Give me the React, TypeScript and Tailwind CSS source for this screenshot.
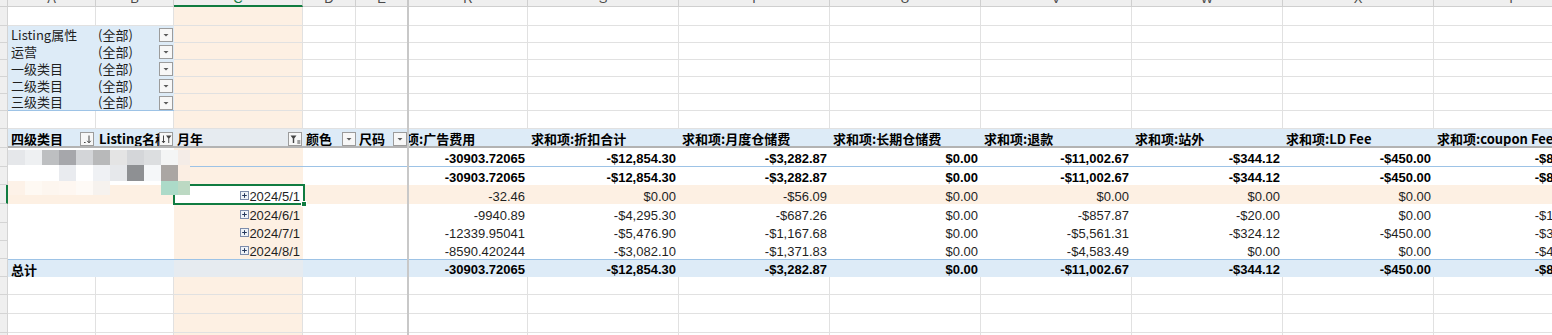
import React from "react";

const GRID = "border-r border-b border-[#e1e1e1]";
const GRID_B = "border-b border-[#e1e1e1]";
const ORANGE = "bg-[#fdf0e3]";
const BLUE = "bg-[#ddebf7]";
const BLUE_C = "bg-[#e6ebf0]";
const CJK = "font-['Noto_Sans_CJK_SC',sans-serif]";

const W = {
  A: "w-[88px]",
  B: "w-[78px]",
  C: "w-[129px]",
  D: "w-[53px]",
  E: "w-[51px]",
  R: "w-[119px]",
  V: "w-[151px]",
  Y: "w-[155px]",
};

const HEADERS = [
  "求和项:折扣合计",
  "求和项:月度仓储费",
  "求和项:长期仓储费",
  "求和项:退款",
  "求和项:站外",
  "求和项:LD Fee",
  "求和项:coupon Fee",
];
const LETTERS = ["S", "T", "U", "V", "W", "X", "Y"];
const FILTERS = ["Listing属性", "运营", "一级类目", "二级类目", "三级类目"];

const TOTAL = ["-30903.72065", "-$12,854.30", "-$3,282.87", "$0.00", "-$11,002.67", "-$344.12", "-$450.00", "-$840.00"];

const MONTHS = [
  { date: "2024/6/1", h: "h-[19px]", vals: ["-9940.89", "-$4,295.30", "-$687.26", "$0.00", "-$857.87", "-$20.00", "$0.00", "-$105.00"] },
  { date: "2024/7/1", h: "h-[18px]", vals: ["-12339.95041", "-$5,476.90", "-$1,167.68", "$0.00", "-$5,561.31", "-$324.12", "-$450.00", "-$320.00"] },
  { date: "2024/8/1", h: "h-[18px]", vals: ["-8590.420244", "-$3,082.10", "-$1,371.83", "$0.00", "-$4,583.49", "$0.00", "$0.00", "-$415.00"] },
];
const MAY = ["-32.46", "$0.00", "-$56.09", "$0.00", "$0.00", "$0.00", "$0.00", "$0.00"];

// pixelated (blurred) labels over the first pivot rows
const MOSAIC = [
  {
    h: "h-[15px]",
    cells: ["bg-[#e5e7ea]", "bg-[#eef0f2]", "bg-[#bdbfc1]", "bg-[#a6a7ab]", "bg-[#d3d5d8]", "bg-[#b8b9ba]", "bg-[#e4e4e4]", "bg-[#d4d6d9]", "bg-[#dcdee0]", "bg-[#f4f5f5]", "bg-[#f4ece7]"],
  },
  {
    h: "h-[16px]",
    cells: ["bg-white", "bg-white", "bg-white", "bg-[#e9ebef]", "bg-white", "bg-[#eff1f4]", "bg-[#e6e8eb]", "bg-[#8e9093]", "bg-[#f5f7f9]", "bg-[#aaa6a3]", "bg-[#fbeee3]"],
  },
  {
    h: "h-[14px]",
    cells: ["bg-[#fdf2e8]", "bg-[#fef9f3]", "bg-[#fdf6ef]", "bg-[#fef7f1]", "bg-[#fefaf6]", "bg-[#f6f2ee]", "bg-transparent", "bg-transparent", "bg-transparent", "bg-[#acdac8]", "bg-[#bcd9c3]"],
  },
];

type CellProps = { w: string; className?: string; clip?: boolean; children?: React.ReactNode };

const Cell = ({ w, className = "", clip = true, children }: CellProps) => (
  <div className={`relative flex shrink-0 items-end ${clip ? "overflow-hidden" : ""} ${w} ${className}`}>{children}</div>
);

const Txt = ({ children, className = "" }: { children: React.ReactNode; className?: string }) => (
  <span className={`whitespace-nowrap leading-[14px] ${className}`}>{children}</span>
);

const RowHead = ({ sel = false }: { sel?: boolean }) => (
  <div
    className={`w-[8px] shrink-0 border-b border-[#d4d4d4] bg-[#efefef] ${
      sel ? "border-r-2 border-r-[#107c41]" : "border-r"
    }`}
  />
);

const Divider = () => <div className="w-[2px] shrink-0 bg-[#c8c8c8]" />;

const Btn = ({ children, className }: { children: React.ReactNode; className: string }) => (
  <div className={`absolute z-10 flex h-[14px] w-[14px] items-center justify-center border border-[#9c9c9c] bg-[#f7f7f7] ${className}`}>
    {children}
  </div>
);

const Tri = () => (
  <svg width="12" height="12" viewBox="0 0 12 12">
    <path d="M3.5 5h5L6 7.6z" fill="#5a5a5a" />
  </svg>
);

const SortIcon = () => (
  <svg width="12" height="12" viewBox="0 0 12 12" fill="none" stroke="#444" strokeWidth="1">
    <path d="M3 9.5h1.6" />
    <path d="M8 2.5v7.2M6.2 7.8 8 9.8l1.8-2" />
  </svg>
);

const SortFilterIcon = () => (
  <svg width="12" height="12" viewBox="0 0 12 12">
    <path d="M3.5 2.5v7.2M2 8l1.5 1.8L5 8" fill="none" stroke="#444" strokeWidth="1" />
    <path d="M6 2.5h5.5L9.2 5.6V10H8.3V5.6z" fill="#444" />
  </svg>
);

const FilterIcon = () => (
  <svg width="12" height="12" viewBox="0 0 12 12">
    <path d="M1.5 2.5h6L5.2 5.6V10H3.8V5.6z" fill="#444" />
    <path d="M8.3 8h3M8.3 10h3" fill="none" stroke="#444" strokeWidth="1" />
  </svg>
);

const Plus = () => (
  <svg className="mb-[4px] shrink-0" width="9" height="9" viewBox="0 0 9 9">
    <rect x="0.5" y="0.5" width="8" height="8" fill="#eef2f8" stroke="#7d8cab" />
    <path d="M2.2 4.5h4.6M4.5 2.2v4.6" stroke="#24375c" strokeWidth="1" />
  </svg>
);

const Letter = ({ children, className = "" }: { children: React.ReactNode; className?: string }) => (
  <span className={`-mt-[8px] leading-[13px] text-[#4a4a4a] ${className}`}>{children}</span>
);

function LetterRow() {
  const cell = "relative flex shrink-0 items-start justify-center overflow-hidden border-b border-[#cfcfcf] bg-[#efefef]";
  return (
    <div className="flex h-[7px]">
      <div className="w-[8px] shrink-0 border-r border-b border-[#cfcfcf] bg-[#efefef]" />
      <div className={`${cell} ${W.A} border-r`}><Letter>A</Letter></div>
      <div className={`${cell} ${W.B} border-r`}><Letter>B</Letter></div>
      <div className={`${cell} ${W.C} border-r border-b-2 border-b-[#107c41]`}><Letter className="text-[#107c41]">C</Letter></div>
      <div className={`${cell} ${W.D} border-r`}><Letter>D</Letter></div>
      <div className={`${cell} ${W.E}`}><Letter>E</Letter></div>
      <Divider />
      <div className={`${cell} ${W.R} border-r`}><Letter>R</Letter></div>
      {LETTERS.map((l) => (
        <div key={l} className={`${cell} ${l === "Y" ? W.Y : W.V} border-r`}><Letter>{l}</Letter></div>
      ))}
    </div>
  );
}

function BlankRow({ h }: { h: string }) {
  return (
    <div className={`flex ${h}`}>
      <RowHead />
      <Cell w={W.A} className={GRID} />
      <Cell w={W.B} className={GRID} />
      <Cell w={W.C} className={`${GRID} ${ORANGE}`} />
      <Cell w={W.D} className={GRID} />
      <Cell w={W.E} className={GRID_B} />
      <Divider />
      <Cell w={W.R} className={GRID} />
      {LETTERS.map((l) => (
        <Cell key={l} w={l === "Y" ? W.Y : W.V} className={GRID} />
      ))}
    </div>
  );
}

function FilterRow({ label, last }: { label: string; last: boolean }) {
  const edge = last ? "border-b border-[#9dc3e6]" : "";
  return (
    <div className={`flex h-[17px] ${CJK}`}>
      <RowHead />
      <Cell w={W.A} className={`${BLUE} ${edge} pl-[3px]`}>
        <Txt className="mb-[1px]">{label}</Txt>
      </Cell>
      <Cell w={W.B} className={`${BLUE} ${edge} pl-[2px]`}>
        <Txt className="mb-[1px]">(全部)</Txt>
        <Btn className="top-[2px] right-px">
          <Tri />
        </Btn>
      </Cell>
      <Cell w={W.C} className={`${GRID} ${ORANGE}`} />
      <Cell w={W.D} className={GRID} />
      <Cell w={W.E} className={GRID_B} />
      <Divider />
      <Cell w={W.R} className={GRID} />
      {LETTERS.map((l) => (
        <Cell key={l} w={l === "Y" ? W.Y : W.V} className={GRID} />
      ))}
    </div>
  );
}

function HeaderRow() {
  const edge = "border-b-2 border-[#b3b3b3]";
  return (
    <div className={`flex h-[19px] font-bold text-black ${CJK}`}>
      <RowHead />
      <Cell w={W.A} className={`${BLUE} ${edge} pl-[3px]`}>
        <Txt>四级类目</Txt>
        <Btn className="top-[3px] right-[2px]">
          <SortIcon />
        </Btn>
      </Cell>
      <Cell w={W.B} className={`${BLUE} ${edge} pl-[3px]`}>
        <Txt>Listing名称</Txt>
        <Btn className="top-[3px] right-px">
          <SortFilterIcon />
        </Btn>
      </Cell>
      <Cell w={W.C} className={`${BLUE_C} ${edge} pl-[3px]`}>
        <Txt>月年</Txt>
        <Btn className="top-[3px] right-px">
          <FilterIcon />
        </Btn>
      </Cell>
      <Cell w={W.D} className={`${BLUE} ${edge} pl-[3px]`}>
        <Txt>颜色</Txt>
        <Btn className="top-[3px] right-0">
          <Tri />
        </Btn>
      </Cell>
      <Cell w={W.E} className={`${BLUE} ${edge} pl-[3px]`}>
        <Txt>尺码</Txt>
        <Btn className="top-[3px] right-0">
          <Tri />
        </Btn>
      </Cell>
      <Divider />
      <Cell w={W.R} className={`${BLUE} ${edge}`}>
        <Txt className="ml-[-29px]">求和项:广告费用</Txt>
      </Cell>
      {HEADERS.map((t, i) => (
        <Cell key={t} w={i === HEADERS.length - 1 ? W.Y : W.V} className={`${BLUE} ${edge} pl-[3px]`}>
          <Txt>{t}</Txt>
        </Cell>
      ))}
    </div>
  );
}

type PivotProps = {
  h: string;
  vals: string[];
  bg?: string;
  cBg?: string;
  edge?: string;
  bold?: boolean;
  label?: string;
  date?: string;
  selected?: boolean;
};

function PivotRow({ h, vals, bg = "", cBg = ORANGE, edge = "", bold = false, label, date, selected = false }: PivotProps) {
  return (
    <div className={`flex ${h} ${bold ? "font-bold text-black" : ""}`}>
      <RowHead sel={selected} />
      <Cell w={W.A} className={`${bg} ${edge} pl-[3px]`}>
        {label && <Txt className={CJK}>{label}</Txt>}
      </Cell>
      <Cell w={W.B} className={`${bg} ${edge}`} />
      <Cell w={W.C} clip={!selected} className={`${selected ? "bg-white" : cBg} ${edge} justify-end pr-[3px]`}>
        {date && (
          <>
            <Plus />
            <Txt>{date}</Txt>
          </>
        )}
        {selected && (
          <>
            <div className="absolute -top-px -left-px -right-[2px] -bottom-px z-10 border-2 border-[#107c41]" />
            <div className="absolute -right-[4px] -bottom-[3px] z-10 h-[6px] w-[6px] border border-white bg-[#107c41]" />
          </>
        )}
      </Cell>
      <Cell w={W.D} className={`${bg} ${edge}`} />
      <Cell w={W.E} className={`${bg} ${edge}`} />
      <Divider />
      <Cell w={W.R} className={`${bg} ${edge} justify-end pr-[3px]`}>
        <Txt>{vals[0]}</Txt>
      </Cell>
      {vals.slice(1).map((v, i) => (
        <Cell key={i} w={i === vals.length - 2 ? W.Y : W.V} className={`${bg} ${edge} justify-end pr-[3px]`}>
          <Txt>{v}</Txt>
        </Cell>
      ))}
    </div>
  );
}

export default function App() {
  return (
    <div className="relative h-[335px] w-[1552px] overflow-hidden bg-white font-['Liberation_Sans','Noto_Sans_CJK_SC',sans-serif] text-[13px] text-[#1f1f1f]">
      <LetterRow />
      <BlankRow h="h-[19px]" />
      {FILTERS.map((f, i) => (
        <FilterRow key={f} label={f} last={i === FILTERS.length - 1} />
      ))}
      <BlankRow h="h-[18px]" />
      <HeaderRow />
      <PivotRow h="h-[19px]" vals={TOTAL} bold edge="border-b border-[#9dc3e6]" />
      <PivotRow h="h-[18px]" vals={TOTAL} bold />
      <PivotRow h="h-[19px]" vals={MAY} bg={ORANGE} date="2024/5/1" selected />
      {MONTHS.map((m) => (
        <PivotRow key={m.date} h={m.h} vals={m.vals} date={m.date} />
      ))}
      <PivotRow h="h-[18px]" vals={TOTAL} bold bg={BLUE} cBg={BLUE_C} edge="border-t border-[#9dc3e6]" label="总计" />
      <BlankRow h="h-[18px]" />
      <BlankRow h="h-[19px]" />
      <BlankRow h="h-[19px]" />
      <BlankRow h="h-[19px]" />

      <div className="absolute left-[8px] top-[150px] z-20 flex flex-col">
        {MOSAIC.map((r, i) => (
          <div key={i} className={`flex ${r.h}`}>
            {r.cells.map((c, j) => (
              <div key={j} className={`${j === 10 ? "w-[12px]" : "w-[17px]"} ${c}`} />
            ))}
          </div>
        ))}
      </div>
    </div>
  );
}
